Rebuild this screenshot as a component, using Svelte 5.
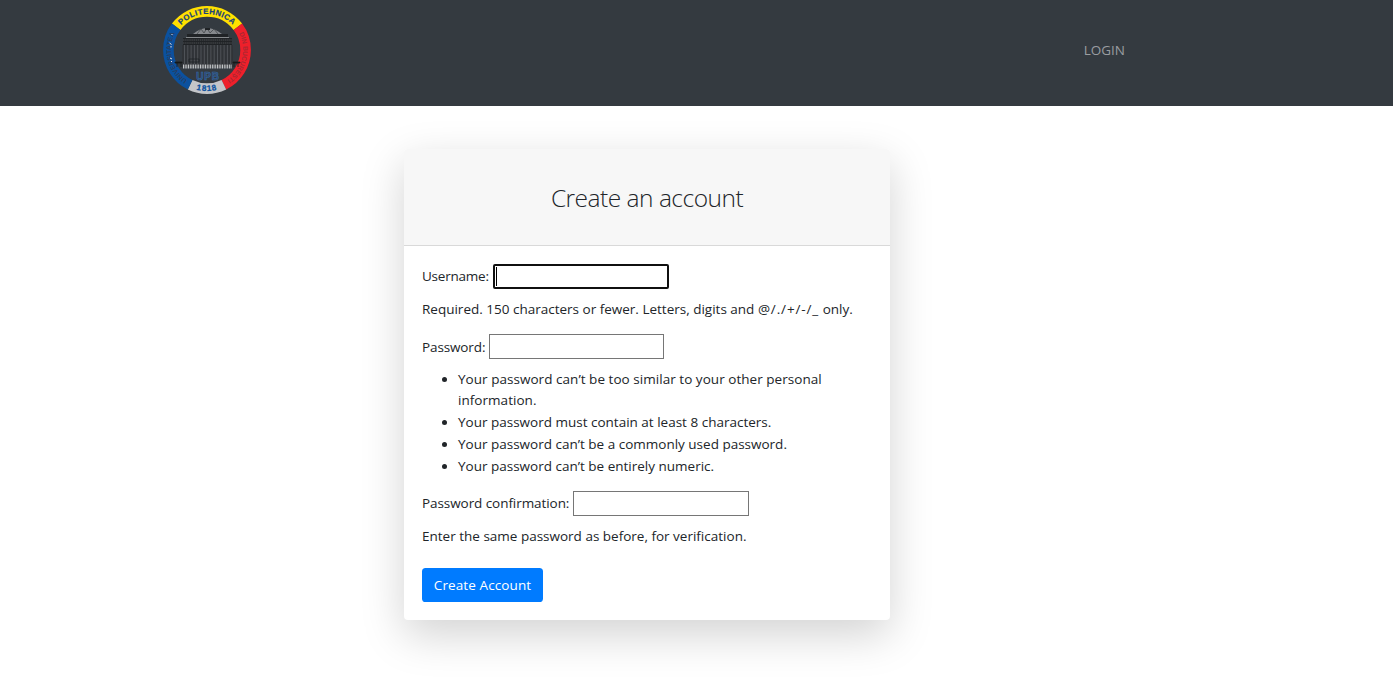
<script lang="ts">
  const rules = [
    'Your password can’t be too similar to your other personal information.',
    'Your password must contain at least 8 characters.',
    'Your password can’t be a commonly used password.',
    'Your password can’t be entirely numeric.',
  ];
  const columns = Array.from({ length: 15 }, (_, i) => 22.5 + i * 3.3);
</script>

<header class="navbar">
  <a class="brand" href="#home" aria-label="Home">
    <svg viewBox="0 0 90 90" width="90" height="90">
      <defs>
        <path id="arc-top" d="M9 45A36 36 0 0 1 81 45" />
        <path id="arc-left" d="M45 81A36 36 0 0 1 45 9" />
        <path id="arc-right" d="M45 9A36 36 0 0 1 45 81" />
        <path id="arc-bottom" d="M4 45A41 41 0 0 0 86 45" />
      </defs>
      <g fill="none" stroke-width="10.6" transform="rotate(-90 45 45)">
        <circle cx="45" cy="45" r="38.6" pathLength="360" stroke="#ffe000" stroke-dasharray="106 254" stroke-dashoffset="53" />
        <circle cx="45" cy="45" r="38.6" pathLength="360" stroke="#ee202b" stroke-dasharray="101 259" stroke-dashoffset="-53" />
        <circle cx="45" cy="45" r="38.6" pathLength="360" stroke="#c3c5c9" stroke-dasharray="52 308" stroke-dashoffset="-154" />
        <circle cx="45" cy="45" r="38.6" pathLength="360" stroke="#0b519f" stroke-dasharray="101 259" stroke-dashoffset="-206" />
      </g>
      <path d="M31 29Q45 17 60 29Z" fill="#85888c" />
      <path d="M35 29l4-5 3 4 3-5 3 5 4-4 4 5" fill="none" stroke="#44474b" stroke-width=".8" />
      <path d="M43 23h5v2h-5zM25 29h41v3H25zM21 33h49v7H21z" fill="#202326" />
      <path d="M24 32.5h43" stroke="#85888b" stroke-width="1" />
      <path d="M21 35h49M21 38h49" stroke="#606366" stroke-width=".7" stroke-dasharray="1.5 .6" />
      <path d="M20 40h51v22H20z" fill="#303337" />
      {#each columns as x}
        <path d="M{x} 40v19" stroke="#575b5f" stroke-width=".8" />
      {/each}
      <path d="M27 54h10v3H27z" fill="none" stroke="#202326" stroke-width=".8" />
      <path d="M21 61.5h49" stroke="#d5d7d9" stroke-width="4" stroke-dasharray=".9 .8" />
      <path d="M13 57h7v1h-7zM71 57h7v1h-7zM15 58v4M19 58v4M72 58v4M76 58v4" fill="#17191b" stroke="#17191b" stroke-width=".8" />
      <text x="46" y="75" text-anchor="middle" class="upb">UPB</text>
      <g class="ring">
        <text class="top" fill="#173f7d"><textPath href="#arc-top" startOffset="50%" text-anchor="middle">POLITEHNICA</textPath></text>
        <text fill="#273e5f"><textPath href="#arc-left" startOffset="42%" text-anchor="middle">UNIVERSITATEA</textPath></text>
        <text fill="#a92731"><textPath href="#arc-right" startOffset="58%" text-anchor="middle">DIN BUCUREȘTI</textPath></text>
        <text class="year" fill="#0b519f"><textPath href="#arc-bottom" startOffset="50%" text-anchor="middle">1818</textPath></text>
      </g>
      <path d="M9.5 29l1 1M7.5 38l2 1.5M9 41v1.5M8 53l2 1M9.5 56v1" stroke="#dfe5ec" stroke-width="1" />
    </svg>
  </a>
  <a class="login" href="#login">LOGIN</a>
</header>

<main>
  <section class="card">
    <div class="card-header"><h3>Create an account</h3></div>
    <form class="card-body" onsubmit={(e) => e.preventDefault()}>
      <div class="field user">
        <label for="username">Username:</label>
        <div class="focused"><input id="username" type="text" /><i class="caret"></i></div>
      </div>
      <p class="help">Required. 150 characters or fewer. Letters, digits and <span class="symbols">@/./+/-/_</span> only.</p>
      <div class="field pass">
        <label for="password">Password:</label>
        <input id="password" type="password" />
      </div>
      <ul>
        {#each rules as rule}<li>{rule}</li>{/each}
      </ul>
      <div class="field confirm">
        <label for="confirm">Password confirmation:</label>
        <input id="confirm" type="password" />
      </div>
      <p class="help">Enter the same password as before, for verification.</p>
      <button type="submit">Create Account</button>
    </form>
  </section>
</main>

<style>
  :global(body) {
    background: #fff;
    color: #212529;
    font-family: 'Open Sans', 'Noto Sans', sans-serif;
    font-size: 13.5px;
    line-height: 21.7px;
  }
  .navbar {
    box-sizing: border-box;
    display: flex;
    justify-content: space-between;
    height: 106px;
    padding: 5px 268px 0 162px;
    background: #343a40;
  }
  main {
    box-sizing: border-box;
    height: 579px;
    padding: 43px 0 0 404px;
  }
  .brand, .brand svg { display: block; width: 90px; height: 90px; }
  .ring { font: bold 6.7px 'Liberation Sans', sans-serif; }
  .top { font-size: 7.8px; letter-spacing: .45px; stroke: #173f7d; stroke-width: .2; }
  .year { font-size: 8px; letter-spacing: .9px; stroke: #0b519f; stroke-width: .3; }
  .upb { font: bold 10px 'Liberation Sans', sans-serif; letter-spacing: .8px; fill: #34465e; stroke: #2f68ab; stroke-width: .6; }
  .login {
    margin-top: 35px;
    color: #9a9da0;
    text-decoration: none;
  }
  .card {
    width: 486px;
    height: 471px;
    border-radius: 4px;
    overflow: hidden;
    background: #fff;
    box-shadow: 0 14.4px 43.2px rgba(0, 0, 0, .175);
  }
  .card-header {
    box-sizing: border-box;
    display: flex;
    align-items: center;
    justify-content: center;
    height: 97px;
    border-bottom: 1px solid #d9d9d9;
    background: #f7f7f7;
  }
  h3 { margin: 1px 0 0; font-size: 24.5px; font-weight: 300; line-height: 30px; letter-spacing: -.5px; }
  .card-body { padding: 18px; }
  .field { display: flex; align-items: center; gap: 4px; height: 25px; }
  label { white-space: nowrap; letter-spacing: -.12px; }
  .user label { letter-spacing: -.22px; }
  .pass label { padding-top: 3px; }
  .pass input { width: 175px; }
  .confirm label { letter-spacing: -.07px; }
  input {
    box-sizing: border-box;
    display: block;
    width: 176px;
    height: 25px;
    margin: 0;
    border: 1px solid #767676;
    border-radius: 0;
    background: #fff;
    outline: none;
  }
  .focused { position: relative; }
  .focused input { border: 2px solid #101010; border-radius: 2px; }
  .caret { position: absolute; left: 3px; top: 3px; width: 1px; height: 19px; background: #000; }
  .help { margin: 10px 0 13px; white-space: nowrap; }
  .symbols { letter-spacing: .87px; }
  ul { margin: 10px 0 14px; padding-left: 36px; }
  li:first-child { letter-spacing: .04px; }
  button {
    display: block;
    width: 121px;
    height: 34px;
    margin-top: 20px;
    padding: 1px 0 0;
    border: 0;
    border-radius: 3.6px;
    background: #007bff;
    color: #fff;
    font: inherit;
    letter-spacing: .1px;
  }
</style>
